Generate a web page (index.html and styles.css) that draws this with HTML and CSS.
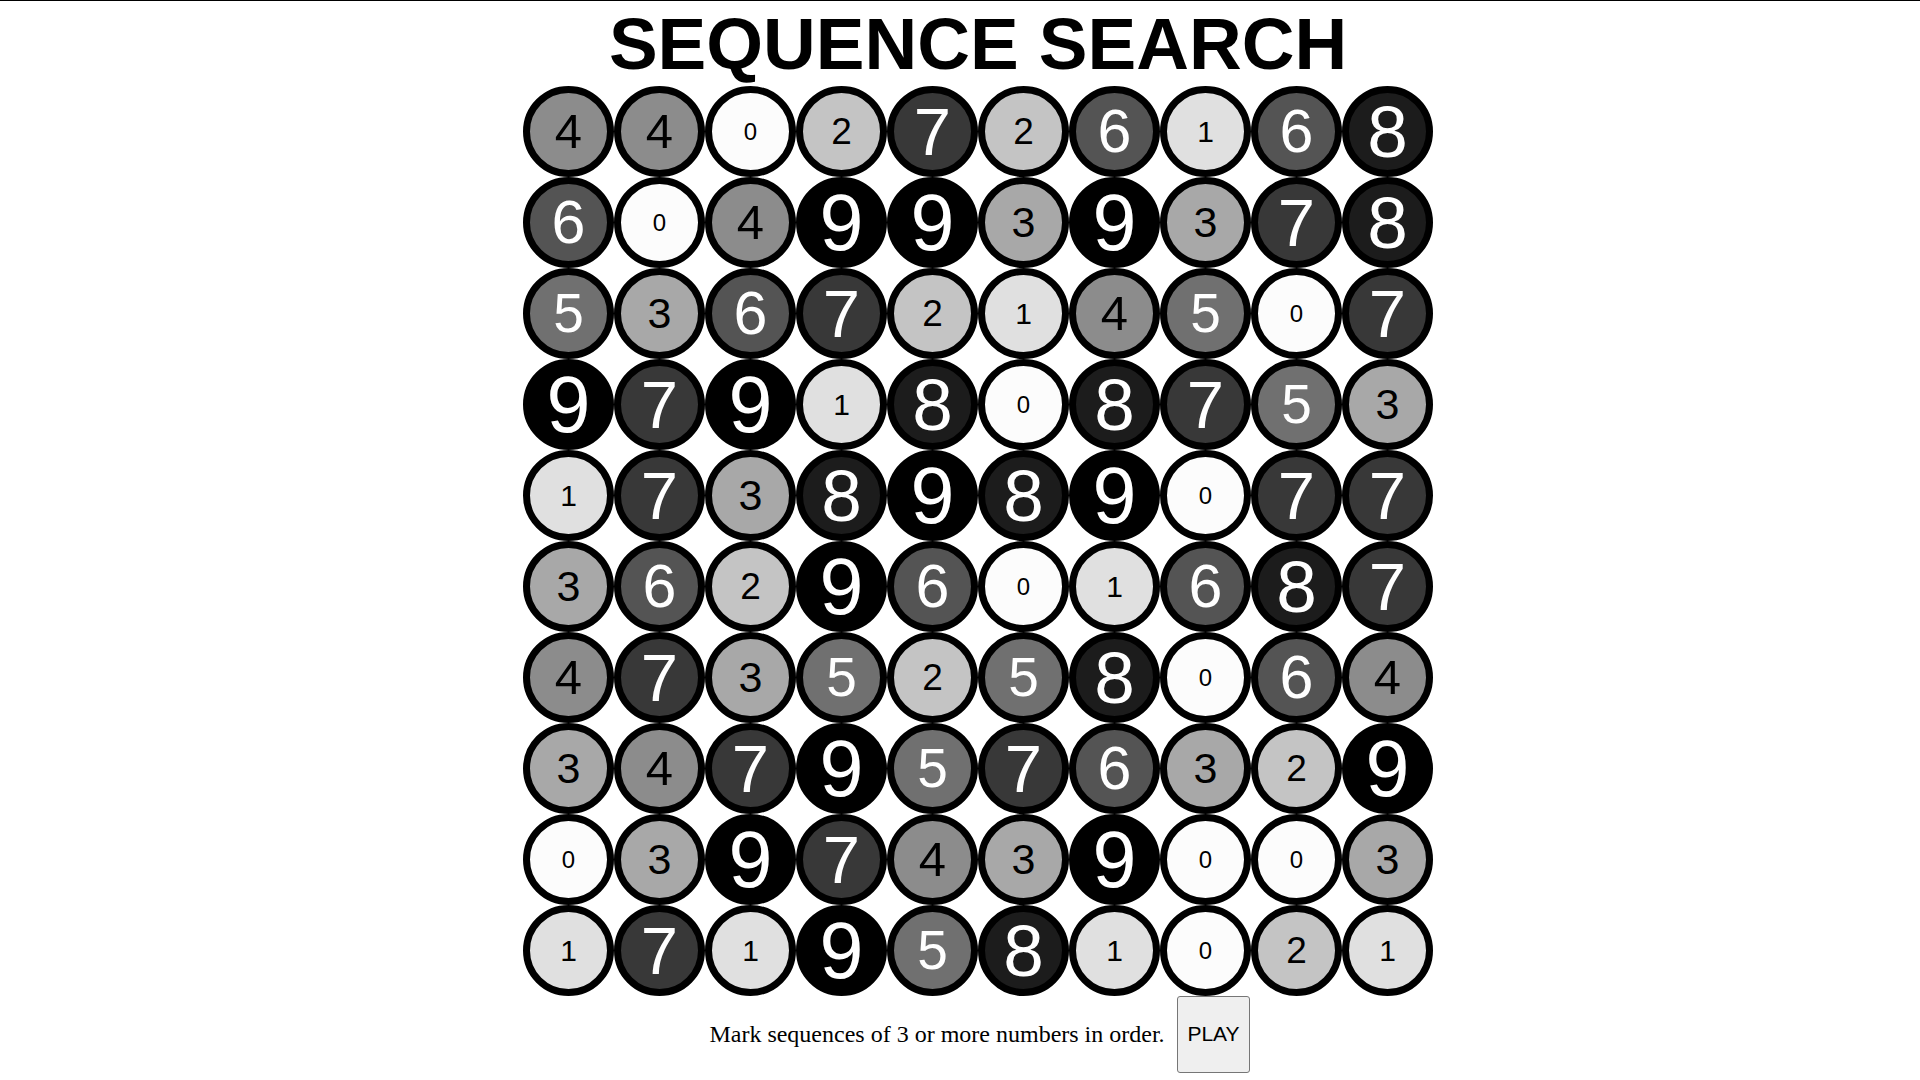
FILE: index.html
```
<!DOCTYPE html>
<html lang="en">
<head>
<meta charset="utf-8">
<title>Sequence Search</title>
<link rel="stylesheet" href="styles.css">
</head>
<body>
<main class="game">
<h1 class="title">SEQUENCE SEARCH</h1>
<div class="board" id="board"></div>
<div class="footer">
<p class="hint">Mark sequences of 3 or more numbers in order.</p>
<button class="play" type="button">PLAY</button>
</div>
</main>
<script src="board.js"></script>
</body>
</html>
```
FILE: styles.css
```
* { box-sizing: border-box; }
body {
  margin: 0;
  padding-left: 36px;
  border-top: 1px solid #000;
  background: #fff;
  color: #000;
}
.game {
  display: flex;
  flex-direction: column;
  align-items: center;
}
.title {
  margin: 0;
  font: bold 73px/85px "Liberation Sans", Arial, sans-serif;
}
.board {
  display: grid;
  grid-template-columns: repeat(10, 91px);
}
.cell {
  aspect-ratio: 1;
  padding: 0;
  border: 7px solid #000;
  border-radius: 50%;
  color: #000;
  font-family: "Liberation Sans", Arial, sans-serif;
  line-height: 77px;
  text-align: center;
}
.n0 { background: #fcfcfc; font-size: 24px; }
.n1 { background: #e0e0e0; font-size: 30px; }
.n2 { background: #c4c4c4; font-size: 37px; }
.n3 { background: #a8a8a8; font-size: 43px; }
.n4 { background: #8c8c8c; font-size: 49px; }
.n5 { background: #707070; font-size: 55px; color: #fff; }
.n6 { background: #545454; font-size: 61px; color: #fff; }
.n7 { background: #383838; font-size: 67px; color: #fff; }
.n8 { background: #1c1c1c; font-size: 73px; color: #fff; }
.n9 { background: #000; font-size: 79px; color: #fff; }
.footer {
  display: flex;
  align-items: center;
  gap: 9px;
}
.hint {
  min-width: 462px;
  margin: 0;
  padding-bottom: 2px;
  font: 24px/28px "Liberation Serif", "Times New Roman", serif;
  text-align: center;
}
.play {
  width: 73px;
  height: 77px;
  padding: 0 0 2px;
  border: 1px solid #767676;
  border-radius: 3px;
  background: #efefef;
  color: #000;
  font: 21px/24px "Liberation Sans", Arial, sans-serif;
}
```
FILE: board.js
```
const rows = [
  "4402726168",
  "6049939378",
  "5367214507",
  "9791808753",
  "1738989077",
  "3629601687",
  "4735258064",
  "3479576329",
  "0397439003",
  "1719581021"
];
const board = document.getElementById("board");
for (const row of rows) {
  for (const digit of row) {
    const cell = document.createElement("button");
    cell.type = "button";
    cell.className = "cell n" + digit;
    cell.textContent = digit;
    board.append(cell);
  }
}
```
